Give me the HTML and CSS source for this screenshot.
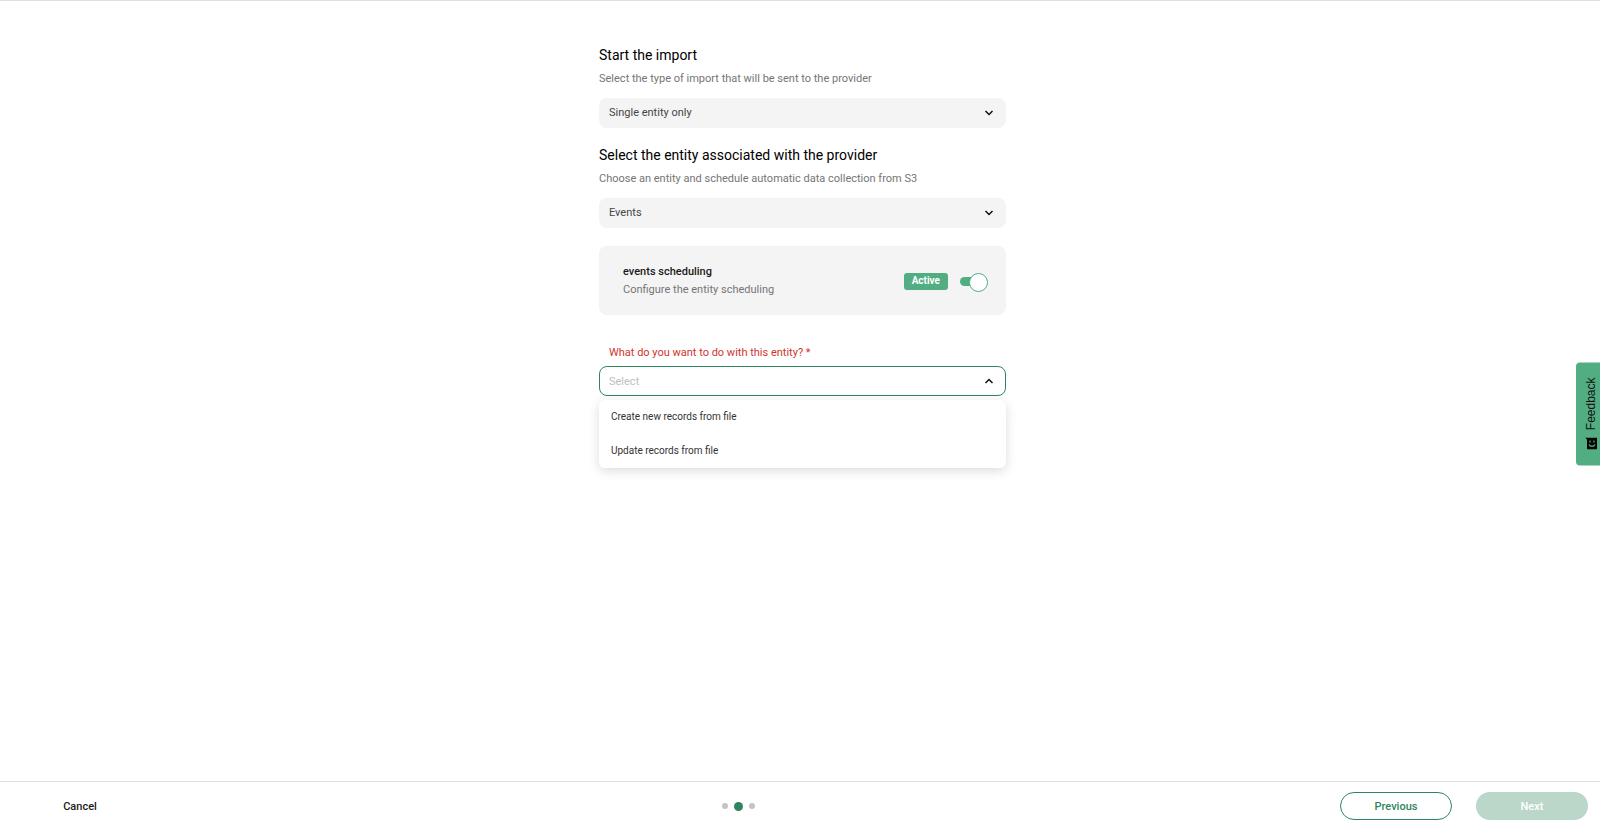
FILE: index.html
```html
<!DOCTYPE html>
<html lang="en">
<head>
    <meta charset="UTF-8">
    <meta name="viewport" content="width=device-width, initial-scale=1.0">
    <title>Start the import</title>
    <link rel="stylesheet" href="styles.css">
</head>
<body>
    <main class="content">
        <form class="import-form" id="import-form">
            <section class="form-section">
                <h2 class="section-title"><label for="import-type">Start the import</label></h2>
                <p class="section-text">Select the type of import that will be sent to the provider</p>
                <div class="select-box">
                    <select class="select" id="import-type">
                        <option>Single entity only</option>
                    </select>
                    <svg class="chevron" viewBox="0 0 10 6"><path d="M1.5 1 5 4.5 8.5 1"/></svg>
                </div>
            </section>

            <section class="form-section">
                <h2 class="section-title"><label for="entity">Select the entity associated with the provider</label></h2>
                <p class="section-text">Choose an entity and schedule automatic data collection from S3</p>
                <div class="select-box">
                    <select class="select" id="entity">
                        <option>Events</option>
                    </select>
                    <svg class="chevron" viewBox="0 0 10 6"><path d="M1.5 1 5 4.5 8.5 1"/></svg>
                </div>
            </section>

            <section class="schedule-card">
                <div class="schedule-info">
                    <label class="schedule-title" for="schedule">events scheduling</label>
                    <p class="schedule-text">Configure the entity scheduling</p>
                </div>
                <span class="badge">Active</span>
                <input class="switch" type="checkbox" id="schedule" checked>
            </section>

            <section class="action-field">
                <label class="action-label" for="action">What do you want to do with this entity? *</label>
                <div class="select-box">
                    <select class="select select-open" id="action" required>
                        <option value="">Select</option>
                    </select>
                    <svg class="chevron" viewBox="0 0 10 6"><path d="M1.5 5 5 1.5 8.5 5"/></svg>
                    <ul class="menu" role="listbox" aria-label="Action">
                        <li class="menu-item" role="option">Create new records from file</li>
                        <li class="menu-item" role="option">Update records from file</li>
                    </ul>
                </div>
            </section>
        </form>
    </main>

    <footer class="footer">
        <button class="btn btn-text" type="button">Cancel</button>
        <div class="steps">
            <span class="step"></span>
            <span class="step step-current"></span>
            <span class="step"></span>
        </div>
        <div class="footer-actions">
            <button class="btn btn-outline" type="button">Previous</button>
            <button class="btn btn-primary" type="submit" form="import-form" disabled>Next</button>
        </div>
    </footer>

    <button class="feedback" type="button">
        <svg class="feedback-icon" viewBox="0 0 12 12">
            <path d="M0 0h12v11a1 1 0 0 1-1 1H3a1 1 0 0 1-1-1V2z"/>
            <path class="face" d="M5 3v2M9 3v2M4 7c1 2.4 5 2.4 6 0"/>
        </svg>
        <span>Feedback</span>
    </button>
</body>
</html>
```

FILE: styles.css
```css
* {
    margin: 0;
    padding: 0;
    box-sizing: border-box;
}

body {
    font-family: Roboto, sans-serif;
    font-size: 11px;
    color: #1a1a1a;
    background: #fff;
    border-top: 1px solid #dfdfdf;
    min-height: 100vh;
    display: flex;
    flex-direction: column;
}

button,
select {
    font-family: inherit;
}

/* Form */
.content {
    flex: 1;
    padding: 44px 16px 16px 21px;
}

.import-form {
    width: 100%;
    max-width: 407px;
    margin: 0 auto;
}

.form-section {
    margin-bottom: 17px;
}

.section-title {
    font-size: 14px;
    font-weight: 400;
    line-height: 20px;
    color: #000;
    margin-bottom: 6px;
}

.section-text {
    color: #757575;
    line-height: 16px;
    margin-bottom: 11px;
}

.select-box {
    position: relative;
}

.select {
    appearance: none;
    display: block;
    width: 100%;
    height: 30px;
    padding: 0 32px 2px 10px;
    font-size: 11px;
    color: #454545;
    background: #f4f4f4;
    border: none;
    border-radius: 8px;
    outline: none;
}

.select-open {
    padding: 0 32px 0 9px;
    color: #c0c0c0;
    background: #fff;
    border: 1px solid #2e8560;
}

.chevron {
    position: absolute;
    top: 12px;
    right: 12px;
    width: 10px;
    height: 6px;
    fill: none;
    stroke: #111;
    stroke-width: 1.5;
    pointer-events: none;
}

/* Scheduling card */
.schedule-card {
    display: flex;
    align-items: center;
    gap: 12px;
    margin-top: 18px;
    padding: 17px 18px 16px 24px;
    background: #f4f4f4;
    border-radius: 8px;
}

.schedule-info {
    flex: 1;
    line-height: 18px;
}

.schedule-title {
    display: block;
    font-weight: 500;
}

.schedule-text {
    color: #757575;
}

.badge {
    height: 17px;
    padding: 0 8px;
    font-size: 10px;
    font-weight: 700;
    line-height: 15px;
    color: #fff;
    background: #53ad82;
    border-radius: 3px;
}

.switch {
    appearance: none;
    position: relative;
    width: 28px;
    height: 17px;
    cursor: pointer;
}

.switch::before {
    content: '';
    position: absolute;
    inset: 4px 2px 4px 0;
    background: #53ad82;
    border-radius: 5px;
}

.switch::after {
    content: '';
    position: absolute;
    top: 0;
    right: 0;
    width: 17px;
    height: 17px;
    background: #fff;
    border: 1px solid #53ad82;
    border-radius: 50%;
}

/* Action field with its open menu */
.action-field {
    margin-top: 30px;
}

.action-label {
    display: block;
    padding: 0 10px;
    line-height: 16px;
    color: #d0342c;
    margin-bottom: 5px;
}

.menu {
    position: absolute;
    top: 34px;
    left: 0;
    width: 100%;
    list-style: none;
    background: #fff;
    border-radius: 6px;
    box-shadow: 0 3px 12px rgba(0, 0, 0, 0.14);
}

.menu-item {
    padding: 0 12px;
    font-size: 10px;
    line-height: 34px;
    color: #333;
    cursor: pointer;
}

/* Footer */
.footer {
    display: flex;
    align-items: center;
    justify-content: space-between;
    padding: 10px 12px 7px 24px;
    border-top: 1px solid #dfdfdf;
}

.footer-actions {
    display: flex;
    gap: 24px;
}

.btn {
    width: 112px;
    height: 28px;
    font-size: 11px;
    font-weight: 500;
    border: none;
    border-radius: 14px;
    cursor: pointer;
}

.btn-text {
    color: #1a1a1a;
    background: none;
}

.btn-outline {
    color: #2e8560;
    background: #fff;
    border: 1px solid #2e8560;
}

.btn-primary {
    color: #fff;
    background: #bad7c9;
}

.steps {
    display: flex;
    align-items: center;
    gap: 6px;
}

.step {
    width: 6px;
    height: 6px;
    background: #c4c4c4;
    border-radius: 50%;
}

.step-current {
    width: 9px;
    height: 9px;
    background: #2e8560;
}

/* Feedback tab pinned to the window edge */
.feedback {
    position: fixed;
    top: 50%;
    right: 0;
    transform: translateY(-50%);
    display: flex;
    align-items: center;
    justify-content: center;
    flex-direction: column-reverse;
    gap: 8px;
    width: 24px;
    height: 103px;
    padding-left: 5px;
    font-family: "Liberation Sans", Arial, sans-serif;
    font-size: 12px;
    color: #111;
    background: #53ad82;
    border: none;
    border-radius: 4px 0 0 4px;
    cursor: pointer;
}

.feedback span {
    writing-mode: vertical-rl;
    transform: rotate(180deg);
}

.feedback-icon {
    width: 12px;
    height: 12px;
}

.feedback-icon .face {
    fill: none;
    stroke: #53ad82;
    stroke-width: 1.2;
}
```
